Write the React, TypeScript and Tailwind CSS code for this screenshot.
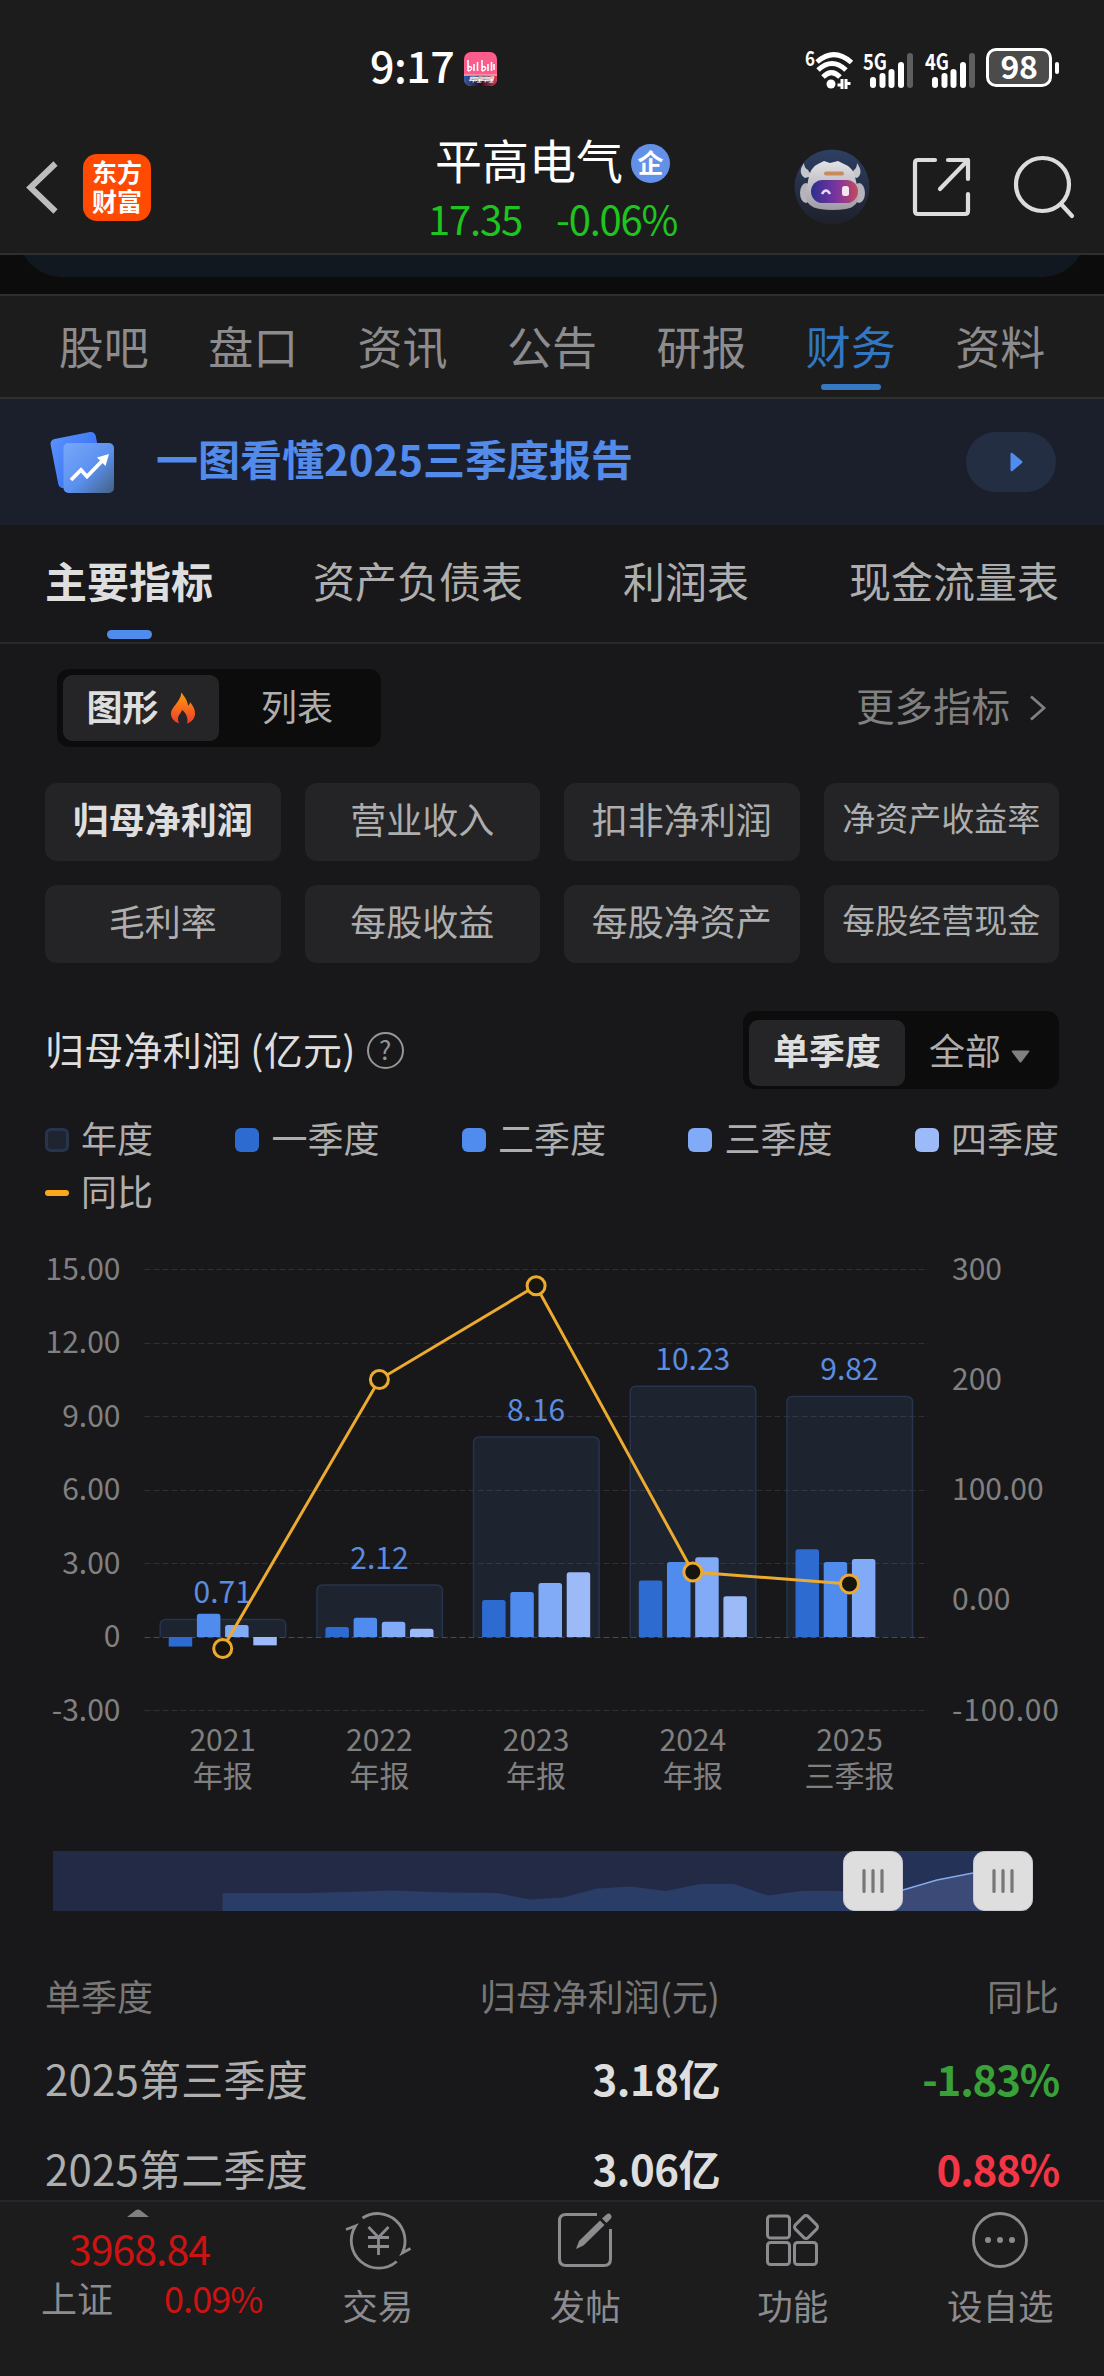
import clsx from "clsx";

const NAV_TABS = ["股吧", "盘口", "资讯", "公告", "研报", "财务", "资料"];
const REPORT_TABS = ["主要指标", "资产负债表", "利润表", "现金流量表"];
const METRICS = [
  "归母净利润",
  "营业收入",
  "扣非净利润",
  "净资产收益率",
  "毛利率",
  "每股收益",
  "每股净资产",
  "每股经营现金",
];

const QUARTER_COLORS = ["#2e6bd0", "#508cee", "#81abf7", "#9bbaf7"];

const LEGEND = [
  { label: "年度", swatch: "border-[3px] border-[#26344d] bg-[#1e2430]" },
  { label: "一季度", swatch: "bg-[#2e6bd0]" },
  { label: "二季度", swatch: "bg-[#508cee]" },
  { label: "三季度", swatch: "bg-[#81abf7]" },
  { label: "四季度", swatch: "bg-[#9bbaf7]" },
];

interface YearData {
  year: string;
  period: string;
  total: number;
  quarters: number[];
  yoy: number;
}

const YEARS: YearData[] = [
  { year: "2021", period: "年报", total: 0.71, quarters: [-0.39, 0.95, 0.49, -0.34], yoy: -44 },
  { year: "2022", period: "年报", total: 2.12, quarters: [0.41, 0.79, 0.62, 0.34], yoy: 200 },
  { year: "2023", period: "年报", total: 8.16, quarters: [1.51, 1.84, 2.2, 2.64], yoy: 285 },
  { year: "2024", period: "年报", total: 10.23, quarters: [2.31, 3.06, 3.26, 1.66], yoy: 25.4 },
  { year: "2025", period: "三季报", total: 9.82, quarters: [3.58, 3.06, 3.18], yoy: 14.6 },
];

const ROWS = [
  { name: "2025第三季度", value: "3.18亿", yoy: "-1.83%", up: false },
  { name: "2025第二季度", value: "3.06亿", yoy: "0.88%", up: true },
];

function SignalBars({ label }: { label: string }) {
  return (
    <svg className="overflow-visible" width="52" height="40" viewBox="0 0 52 40">
      <text x="0" y="18" fontSize="22" fontWeight="700" fill="#fff" textLength="24" lengthAdjust="spacingAndGlyphs">
        {label}
      </text>
      <rect x="7" y="25" width="6" height="11" rx="3" fill="#fff" />
      <rect x="16.5" y="21" width="6" height="15" rx="3" fill="#fff" />
      <rect x="25.5" y="17" width="6" height="19" rx="3" fill="#fff" />
      <rect x="35" y="10" width="6" height="26" rx="3" fill="#fff" />
      <rect x="44" y="1" width="6" height="35" rx="3" fill="#5e5e5e" />
    </svg>
  );
}

function StatusBar() {
  return (
    <div className="flex h-[120px] items-start pt-12 pl-[370px]">
      <span className="w-[94px] text-[43px] leading-[33px] font-medium tracking-[-0.5px] text-white">9:17</span>
      <svg className="mt-1" width="33" height="34" viewBox="0 0 33 34">
        <defs>
          <linearGradient id="biliStrip">
            <stop offset="0" stopColor="#2a5cae" />
            <stop offset="0.5" stopColor="#2a0b1a" />
            <stop offset="1" stopColor="#d43a52" />
          </linearGradient>
          <clipPath id="biliClip">
            <rect width="33" height="34" rx="7" />
          </clipPath>
        </defs>
        <g clipPath="url(#biliClip)">
          <rect width="33" height="34" fill="#fb5c8c" />
          <rect y="23" width="33" height="11" fill="url(#biliStrip)" />
          <rect y="22.5" width="33" height="1.2" fill="#fbb" />
          <path d="M4 8v11M10 12v7M13.5 10v9M18 8v11M24 12v7M27.5 10v9M30 12v6" stroke="#fff" strokeWidth="1.6" fill="none" />
          <path d="M4 14.5q4.5 0 3.5 2.5q-1 2-3.5 2M18 14.5q4.5 0 3.5 2.5q-1 2-3.5 2" stroke="#fff" strokeWidth="1.5" fill="none" />
          <text x="4.5" y="30" fontSize="7" fontWeight="700" fill="#fff" fontStyle="italic" textLength="25">
            哔哩哔哩
          </text>
        </g>
      </svg>
      <div className="mt-1 ml-[308px] flex">
        <svg className="overflow-visible" width="58" height="40" viewBox="0 0 58 40">
          <text x="0" y="13.5" fontSize="20" fontWeight="700" fill="#fff" textLength="10" lengthAdjust="spacingAndGlyphs">
            6
          </text>
          <g fill="none" stroke="#fff" strokeWidth="5">
            <path d="M12 10Q29-5 46.5 10.5" />
            <path d="M13 18Q27 5 41 18" />
            <path d="M18 25Q26.5 16.5 35 25" />
          </g>
          <circle cx="26" cy="32" r="4.5" fill="#fff" />
          <path d="M37 27v10M32.5 33h4.5M41 27v10M41 31.5h4.5" stroke="#fff" strokeWidth="3" />
        </svg>
        <SignalBars label="5G" />
        <div className="w-[10px]" />
        <SignalBars label="4G" />
      </div>
      <div className="ml-[9px] flex h-[39px] w-[66px] items-center justify-center rounded-[10px] border-[3px] border-white bg-[#4b4b4b] text-[32px] leading-none font-bold tracking-[-0.5px] text-white">
        <span className="pb-[5px]">98</span>
      </div>
      <div className="mt-[14px] ml-[3px] h-[12px] w-[4px] rounded-[2px] bg-white" />
    </div>
  );
}

function RobotAvatar() {
  return (
    <svg width="76" height="76" viewBox="0 0 76 76">
      <defs>
        <linearGradient id="robotBg" x1="0" y1="0" x2="0" y2="1">
          <stop offset="0" stopColor="#2d3f63" />
          <stop offset="1" stopColor="#1e2029" />
        </linearGradient>
        <linearGradient id="robotHead" x1="0" y1="0" x2="0" y2="1">
          <stop offset="0" stopColor="#e2e2e6" />
          <stop offset="1" stopColor="#9f9ba3" />
        </linearGradient>
        <linearGradient id="robotVisor">
          <stop offset="0" stopColor="#2b2f8f" />
          <stop offset="0.55" stopColor="#7c35a0" />
          <stop offset="1" stopColor="#c6485d" />
        </linearGradient>
      </defs>
      <circle cx="38" cy="38" r="37.5" fill="url(#robotBg)" />
      <path d="M10 14Q3 24 11 29L18 27L14 21Q10 19 10 14Z" fill="#c6c6cc" />
      <path d="M63 14Q70 24 63 29L56 27L60 21Q63 19 63 14Z" fill="#c6c6cc" />
      <ellipse cx="12" cy="44" rx="6" ry="10" fill="#b5b3bb" />
      <ellipse cx="65" cy="44" rx="6" ry="10" fill="#b5b3bb" />
      <path d="M14 32Q16 18 24 15L30 12L36 14L44 12L50 15Q60 18 62 32L65 46Q64 58 52 60Q38 62 26 60Q12 58 12 46Z" fill="url(#robotHead)" />
      <rect x="30" y="22.5" width="20" height="4" rx="2" fill="#c98a5c" />
      <rect x="17" y="31" width="47" height="23" rx="11.5" fill="url(#robotVisor)" />
      <path d="M28 45Q32 38 36 45" stroke="#e6dcf5" strokeWidth="2.5" fill="none" />
      <rect x="48" y="37" width="7" height="10" rx="2.5" fill="#f3e6f2" />
    </svg>
  );
}

function Header() {
  return (
    <header className="flex h-[135px] items-start border-b-2 border-[#2f2f30]">
      <svg className="mt-[40px] ml-[26px]" width="34" height="56" viewBox="0 0 34 56">
        <path d="M29.5 3.5L4.5 27.5L29.5 51.5" fill="none" stroke="#bdbdbd" strokeWidth="6" />
      </svg>
      <div className="mt-[34px] ml-[23px] flex h-[67px] w-[68px] flex-col items-center rounded-[14px] bg-[#ff4a03] pt-[3px] text-[25px] leading-[29px] font-bold text-white">
        <span>东方</span>
        <span>财富</span>
      </div>
      <div className="ml-[277px] flex w-[260px] flex-col">
        <div className="flex pt-[11px] pl-[7px]">
          <span className="text-[47px] leading-[56px] text-white">平高电气</span>
          <span className="mt-[13px] ml-[8px] flex h-[39px] w-[39px] items-center justify-center rounded-full bg-[#6491e8] pb-[3px] text-[26px] leading-none font-bold text-white">
            企
          </span>
        </div>
        <div className="mt-[7px] flex text-[40px] leading-[48px] tracking-[-1.2px] text-[#1fc51f]">
          <span className="w-[128px]">17.35</span>
          <span>-0.06%</span>
        </div>
      </div>
      <div className="mt-[29px] ml-[106px] flex items-center gap-[42px]">
        <RobotAvatar />
        <svg width="59" height="60" viewBox="0 0 59 60" fill="none" stroke="#dcdcdc" strokeWidth="4.2" strokeLinecap="round">
          <path d="M23 3H6Q3 3 3 6V54Q3 57 6 57H53Q56 57 56 54V37" />
          <path d="M36 3H56V22M56 3L28 32" strokeLinejoin="round" />
        </svg>
        <svg width="62" height="64" viewBox="0 0 62 64" fill="none" stroke="#dcdcdc" strokeWidth="4.2" strokeLinecap="round">
          <circle cx="29.5" cy="29.5" r="26.5" />
          <path d="M48.5 49.5L59 61" />
        </svg>
      </div>
    </header>
  );
}

function NavTabs() {
  return (
    <nav className="flex h-[105px] border-y-2 border-[#2f2f30] bg-[#1c1c1c] px-[29px]">
      {NAV_TABS.map((tab) => {
        const active = tab === "财务";
        return (
          <div key={tab} className="flex flex-1 flex-col items-center">
            <span
              className={clsx(
                "pt-[17px] text-[45px] leading-[66px]",
                active ? "text-[#3277c2]" : "text-[#8c8b8e]",
              )}
            >
              {tab}
            </span>
            {active && <span className="mt-[5px] h-[6px] w-[60px] rounded-full bg-[#3778c4]" />}
          </div>
        );
      })}
    </nav>
  );
}

function Banner() {
  return (
    <div className="flex h-[126px] items-center bg-[#1b1f2b] pr-12 pl-12">
      <svg width="72" height="72" viewBox="0 0 72 72">
        <defs>
          <linearGradient id="cardBack" x1="0" y1="0" x2="1" y2="1">
            <stop offset="0" stopColor="#5b92fb" />
            <stop offset="1" stopColor="#2a66f5" />
          </linearGradient>
          <linearGradient id="cardFront" x1="0" y1="0" x2="1" y2="1">
            <stop offset="0" stopColor="#79a8fb" />
            <stop offset="0.55" stopColor="#5a90ee" />
            <stop offset="1" stopColor="#456081" />
          </linearGradient>
        </defs>
        <rect x="6" y="9" width="46" height="50" rx="5" fill="url(#cardBack)" transform="rotate(-11 29 34)" />
        <rect x="15.5" y="17" width="50.5" height="50" rx="5" fill="url(#cardFront)" />
        <path d="M23 54L33 44L39 50.5L55 34" fill="none" stroke="#fff" strokeWidth="3.8" />
        <path d="M61 28L49 31.5L57.5 40Z" fill="#fff" />
      </svg>
      <span className="ml-[36px] pb-[8px] text-[42px] leading-[60px] font-bold text-[#528bea]">
        一图看懂2025三季度报告
      </span>
      <div className="ml-auto flex h-[60px] w-[90px] items-center justify-center rounded-full bg-[#232e43]">
        <svg className="ml-[10px]" width="13" height="20" viewBox="0 0 13 20">
          <path d="M0.5 2Q0.5 0 2.5 1L12 9Q13 10 12 11L2.5 19Q0.5 20 0.5 18Z" fill="#508cee" />
        </svg>
      </div>
    </div>
  );
}

function ReportTabs() {
  return (
    <div className="flex h-[119px] justify-between border-b-2 border-[#29292b] px-[45px]">
      {REPORT_TABS.map((tab, i) => (
        <div key={tab} className="flex flex-col items-center">
          <span
            className={clsx(
              "pt-[24px] text-[42px] leading-[62px]",
              i === 0 ? "font-bold text-[#dedede]" : "text-[#aeaeae]",
            )}
          >
            {tab}
          </span>
          {i === 0 && <span className="mt-[19px] h-[9px] w-[45px] rounded-full bg-[#508cee]" />}
        </div>
      ))}
    </div>
  );
}

function ViewSwitch() {
  return (
    <div className="mt-[25px] flex items-center justify-between pr-[57px] pl-[57px]">
      <div className="flex h-[78px] w-[324px] rounded-[12px] bg-[#0c0c0c] p-[6px] text-[36px] leading-[60px]">
        <div className="flex w-[156px] justify-center rounded-[9px] bg-[#252527] font-bold text-[#dedede]">
          <span>图形</span>
          <svg className="mt-[17px] ml-[11px]" width="26" height="32" viewBox="0 0 26 32">
            <linearGradient id="flame" x1="0" y1="0" x2="0" y2="1">
              <stop offset="0" stopColor="#ff9d0a" />
              <stop offset="1" stopColor="#ef3b2d" />
            </linearGradient>
            <path
              d="M11.5 0.5C13.5 4 17.5 7.5 18 13.5C19.5 12.5 20 11.5 20 10C23 13.5 25 17 25 21.5C25 26 22 30 17 31.5C18.5 27 16.5 21 12 18C11.5 21 8 23 8 27C8 29 8.5 30.5 9.5 31.5C4 30 1 26 1 21.5C1 15 10 11 11.5 0.5Z"
              fill="url(#flame)"
            />
          </svg>
        </div>
        <div className="flex-1 text-center text-[#aeaeae]">列表</div>
      </div>
      <div className="flex items-center text-[38.5px] leading-[58px] text-[#808080]">
        <span className="pb-[8px]">更多指标</span>
        <svg className="ml-[18px]" width="19" height="28" viewBox="0 0 19 28">
          <path d="M3 2.5L16 14L3 25.5" fill="none" stroke="#808080" strokeWidth="2.8" />
        </svg>
      </div>
    </div>
  );
}

function MetricGrid() {
  return (
    <div className="mt-[36px] grid grid-cols-4 gap-[24px] px-[45px]">
      {METRICS.map((name, i) => (
        <div
          key={name}
          className={clsx(
            "h-[78px] rounded-[12px] bg-[#242426] text-center whitespace-nowrap",
            i === 0 ? "font-bold text-[#dedede]" : "text-[#aeaeae]",
            name.length > 5 ? "text-[33px] leading-[69px]" : "text-[36px] leading-[70px]",
          )}
        >
          {name}
        </div>
      ))}
    </div>
  );
}

function ChartHeader() {
  return (
    <div className="mt-[48px] flex h-[78px] items-center px-[45px]">
      <span className="pb-[4px] text-[39px] leading-[60px] tracking-[0.25px] text-[#dedede]">归母净利润 (亿元)</span>
      <div className="ml-[11px] flex h-[37px] w-[37px] items-center justify-center rounded-full border-[2px] border-[#969696] text-[26px] leading-none text-[#969696]">
        <span className="pb-[2px]">?</span>
      </div>
      <div className="ml-auto flex h-[78px] w-[316px] rounded-[12px] bg-[#0c0c0c] pt-[9px] pr-[6px] pb-[3px] pl-[6px] text-[36px] leading-[58px]">
        <div className="w-[156px] rounded-[9px] bg-[#252527] text-center font-bold text-[#dedede]">单季度</div>
        <div className="flex pl-[24px] text-[#aeaeae]">
          <span>全部</span>
          <svg className="mt-[30px] ml-[10px]" width="19" height="13" viewBox="0 0 19 13">
            <path d="M1.5 0.5H17.5Q19 0.5 18 2L10.5 12Q9.5 13 8.5 12L1 2Q0 0.5 1.5 0.5Z" fill="#808080" />
          </svg>
        </div>
      </div>
    </div>
  );
}

function Legend() {
  return (
    <div className="mt-[24px] px-[45px] text-[36px] leading-[46px] text-[#aeaeae]">
      <div className="flex justify-between">
        {LEGEND.map((item) => (
          <div key={item.label} className="flex h-[53px] items-center gap-[12px]">
            <span className={clsx("h-[24px] w-[24px] rounded-[6px]", item.swatch)} />
            <span className="pb-[6px]">{item.label}</span>
          </div>
        ))}
      </div>
      <div className="flex h-[53px] items-center gap-[12px]">
        <span className="h-[6px] w-[24px] rounded-full bg-[#faa81c]" />
        <span className="pb-[5px]">同比</span>
      </div>
    </div>
  );
}

// plot geometry, in svg pixels
const ZERO_Y = 418;
const UNIT = 24.5;
const BAND = 156.7;
const FIRST_X = 222.7;

const valueY = (v: number) => ZERO_Y - v * UNIT;
const yoyY = (v: number) => 381 - v * 1.1025;
const centerX = (i: number) => FIRST_X + i * BAND;

function topRounded(x: number, y: number, w: number, bottom: number, r: number) {
  return `M${x} ${bottom}V${y + r}Q${x} ${y} ${x + r} ${y}H${x + w - r}Q${x + w} ${y} ${x + w} ${y + r}V${bottom}`;
}

function ProfitChart() {
  const points = YEARS.map((d, i) => `${centerX(i)},${yoyY(d.yoy)}`).join(" ");
  return (
    <svg className="block" width="1104" height="632" viewBox="0 0 1104 632" fontSize="30">
      {[15, 12, 9, 6, 3, 0, -3].map((v) => (
        <g key={v}>
          <line
            x1="144.5"
            x2="928"
            y1={Math.floor(valueY(v)) + 0.5}
            y2={Math.floor(valueY(v)) + 0.5}
            stroke={v === 0 ? "#4a4a4c" : "#303032"}
            strokeDasharray="6 3"
          />
          <text x="120.5" y={valueY(v) + 10} textAnchor="end" fill="#808080">
            {v === 0 ? "0" : v.toFixed(2)}
          </text>
        </g>
      ))}
      {["300", "200", "100.00", "0.00"].map((label, i) => (
        <text key={label} x="952" y={60.5 + i * 110.25} fill="#808080">
          {label}
        </text>
      ))}
      <text x="952" y="501.5" fill="#808080" textLength="107">
        -100.00
      </text>
      {YEARS.map((d, i) => {
        const left = centerX(i) - 63;
        return (
          <g key={d.year}>
            <path
              d={topRounded(left + 0.5, valueY(d.total), 125.5, ZERO_Y, 6)}
              fill="#508cee"
              fillOpacity="0.1"
              stroke="#26344d"
              strokeWidth="1.5"
            />
            {d.quarters.map((q, n) => {
              const x = left + 9 + n * 28.2;
              return q >= 0 ? (
                <path key={n} d={topRounded(x, valueY(q), 23.5, ZERO_Y, 2.5)} fill={QUARTER_COLORS[n]} />
              ) : (
                <rect key={n} x={x} y={ZERO_Y} width="23.5" height={-q * UNIT} fill={QUARTER_COLORS[n]} />
              );
            })}
            <text x={centerX(i)} y={valueY(d.total) - 16.5} textAnchor="middle" fill="#5a8de0">
              {d.total.toFixed(2)}
            </text>
            <text x={centerX(i)} y="532" textAnchor="middle" fill="#808080">
              {d.year}
            </text>
            <text x={centerX(i)} y="568" textAnchor="middle" fill="#808080">
              {d.period}
            </text>
          </g>
        );
      })}
      <polyline points={points} fill="none" stroke="#ecaa2f" strokeWidth="3" />
      {YEARS.map((d, i) => (
        <circle key={d.year} cx={centerX(i)} cy={yoyY(d.yoy)} r="9" fill="#17150f" stroke="#ecaa2f" strokeWidth="3" />
      ))}
    </svg>
  );
}

function Handle({ x }: { x: number }) {
  return (
    <g transform={`translate(${x} 0)`}>
      <rect x="0.5" y="0.5" width="59" height="59" rx="11" fill="#dedede" stroke="#c9cad0" />
      <path d="M21 19.5V40.5M30 19.5V40.5M39 19.5V40.5" stroke="#777" strokeWidth="3.2" strokeLinecap="round" />
    </g>
  );
}

function RangeSlider() {
  return (
    <svg className="block" width="1104" height="60" viewBox="0 0 1104 60">
      <rect x="53" width="975" height="60" fill="#222a45" />
      <path
        d="M222.5 60V42H310L390 39.5L450 41.5L497 42L530 48.5L563 46.5L597 37.5L630 35.5L666 40L700 33H734L768 44.5L801 40H838L873 42V60Z"
        fill="#2a3d67"
      />
      <rect x="873" width="130" height="60" fill="#243258" />
      <path d="M873 42L903 39L937 29L973 22L1003 18V60H873Z" fill="#3b4a76" />
      <path d="M873 42L903 39L937 29L973 22" fill="none" stroke="#86a9ee" strokeWidth="1.5" />
      <Handle x={843} />
      <Handle x={973} />
    </svg>
  );
}

function QuarterTable() {
  return (
    <div className="px-[45px] pt-[46px]">
      <div className="flex h-[75px] items-center text-[36px] text-[#787878]">
        <span className="w-[300px]">单季度</span>
        <span className="w-[375px] text-right">归母净利润(元)</span>
        <span className="flex-1 text-right">同比</span>
      </div>
      {ROWS.map((row) => (
        <div key={row.name} className="flex h-[90px] items-center text-[42px]">
          <span className="w-[300px] tracking-[0.2px] text-[#aeaeae]">{row.name}</span>
          <span className="w-[375px] text-right font-bold tracking-[-0.5px] text-[#dedede]">{row.value}</span>
          <span
            className={clsx(
              "flex-1 text-right font-bold tracking-[-1.2px]",
              row.up ? "text-[#f23645]" : "text-[#38a138]",
            )}
          >
            {row.yoy}
          </span>
        </div>
      ))}
    </div>
  );
}

const TOOL_ICONS = {
  交易: (
    <svg width="68" height="60" viewBox="0 0 68 60" fill="none" stroke="#8c8b90" strokeWidth="2.8">
      <path d="M18.5 8A27.5 27.5 0 0 1 58.3 43L66.5 38.5" />
      <path d="M52.7 51.5A27.5 27.5 0 0 1 11.5 16L2 19.5" />
      <path d="M24.500 17L34.500 27.5L44.500 17M34.500 27.5V45M24 27.5H45M24 36.500H45" />
    </svg>
  ),
  发帖: (
    <svg width="60" height="60" viewBox="0 0 60 60">
      <path d="M42 4.5H11Q4.5 4.5 4.5 11V49Q4.5 55.5 11 55.5H49Q55.5 55.5 55.5 49V19" fill="none" stroke="#8c8b90" strokeWidth="3" />
      <path d="M21 39L24 31L45 10.5L49.5 15L28.5 35.5Z" fill="#8c8b90" />
      <path d="M47 8.5L51.5 4.5Q54 2.5 56 5Q57.5 7 55.5 9L51.5 13Z" fill="#8c8b90" />
    </svg>
  ),
  功能: (
    <svg width="60" height="60" viewBox="0 0 60 60" fill="none" stroke="#8c8b90" strokeWidth="3">
      <rect x="4.5" y="6" width="22" height="22" rx="3" />
      <rect x="4.5" y="32.5" width="22" height="22" rx="3" />
      <rect x="31.5" y="32.5" width="22" height="22" rx="3" />
      <rect x="34" y="8" width="18" height="18" rx="3" transform="rotate(45 43 17)" />
    </svg>
  ),
  设自选: (
    <svg width="60" height="60" viewBox="0 0 60 60">
      <circle cx="30" cy="30" r="26.5" fill="none" stroke="#8c8b90" strokeWidth="2.8" />
      <circle cx="18" cy="30" r="3" fill="#8c8b90" />
      <circle cx="30" cy="30" r="3" fill="#8c8b90" />
      <circle cx="42" cy="30" r="3" fill="#8c8b90" />
    </svg>
  ),
};

function BottomBar() {
  return (
    <footer className="flex h-[176px] border-t-2 border-[#262627] bg-[#1c1c1c]">
      <div className="flex w-[275px] flex-col pt-[7px]">
        <svg className="ml-[127px]" width="22" height="8" viewBox="0 0 22 8">
          <path d="M0 8L9 1Q11 0 13 1L22 8Z" fill="#808080" />
        </svg>
        <span className="mt-[6px] pl-[69px] text-[41px] leading-[48px] tracking-[-1px] text-[#cd1212]">3968.84</span>
        <div className="flex items-center pl-[41px] text-[36px] leading-[52px]">
          <span className="w-[123px] text-[#8c8b90]">上证</span>
          <span className="tracking-[-0.9px] text-[#cd1212]">0.09%</span>
        </div>
      </div>
      <div className="flex">
        {Object.entries(TOOL_ICONS).map(([label, icon]) => (
          <div key={label} className="flex w-[207.5px] flex-col items-center pt-[8px]">
            {icon}
            <span className="mt-[9px] text-[35.5px] leading-[52px] text-[#8c8b90]">{label}</span>
          </div>
        ))}
      </div>
    </footer>
  );
}

export default function App() {
  return (
    <div className="flex h-[2376px] w-[1104px] flex-col overflow-hidden bg-[#18181a] font-['Noto_Sans_CJK_SC','Noto_Sans',sans-serif]">
      <div className="bg-[#1c1c1c]">
        <StatusBar />
        <Header />
      </div>
      <div className="h-[39px] bg-[#0c0c0c]">
        <div className="mx-[18px] h-[22px] overflow-hidden">
          <div className="-mt-[78px] h-[100px] rounded-b-[44px] bg-[#111820]" />
        </div>
      </div>
      <NavTabs />
      <Banner />
      <main className="h-0 grow overflow-hidden">
        <ReportTabs />
        <ViewSwitch />
        <MetricGrid />
        <ChartHeader />
        <Legend />
        <ProfitChart />
        <RangeSlider />
        <QuarterTable />
      </main>
      <BottomBar />
    </div>
  );
}
